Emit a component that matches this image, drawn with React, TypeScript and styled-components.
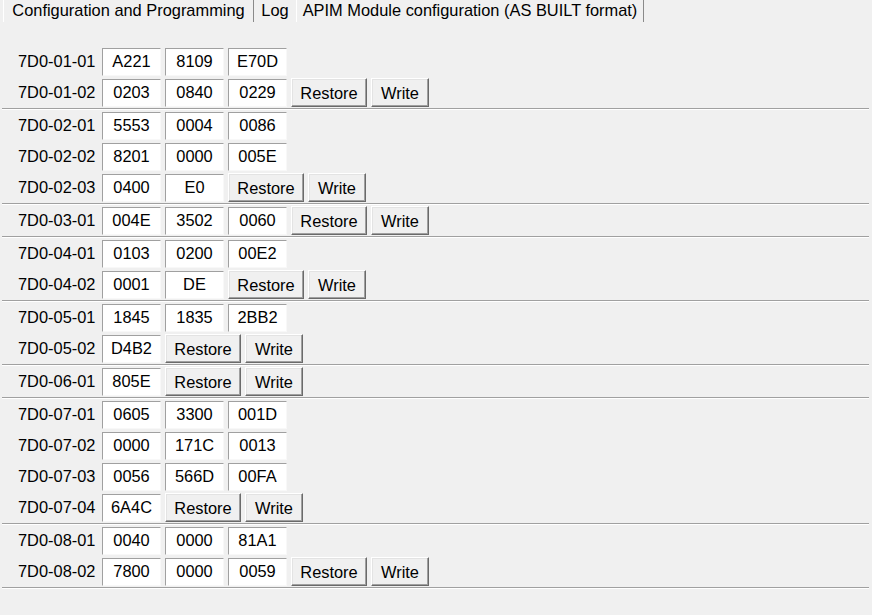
import React from "react";
import styled, { createGlobalStyle } from "styled-components";

const GlobalStyle = createGlobalStyle`
  html, body {
    margin: 0;
    padding: 0;
    background: #f0f0f0;
  }
  body {
    font-family: "Liberation Sans", Arial, sans-serif;
    font-size: 16px;
    color: #000;
  }
`;

const Window = styled.div`
  width: 872px;
  height: 615px;
  overflow: hidden;
  background: #f0f0f0;
  display: flex;
  flex-direction: column;
`;

const TabBar = styled.div`
  display: flex;
  height: 22px;
  padding-left: 3px;
`;

const Tab = styled.div<{ $w: number; $edges: boolean }>`
  box-sizing: border-box;
  width: ${(p) => p.$w}px;
  height: 22px;
  line-height: 21px;
  text-align: center;
  white-space: nowrap;
  font-size: 16.4px;
  border-left: 1px solid ${(p) => (p.$edges ? "#ffffff" : "transparent")};
  border-right: 1px solid ${(p) => (p.$edges ? "#8a8a8a" : "transparent")};
`;

const Content = styled.div`
  padding-top: 24px;
  display: flex;
  flex-direction: column;
`;

const Row = styled.div`
  height: 31px;
  display: flex;
  align-items: center;
  gap: 4px;
  padding-left: 18px;
`;

const Label = styled.div`
  width: 78px;
  margin-right: 2px;
  font-size: 16.4px;
  white-space: nowrap;
`;

const Entry = styled.div`
  box-sizing: border-box;
  width: 59px;
  height: 28px;
  background: #ffffff;
  border-top: 1px solid #a0a0a0;
  border-left: 1px solid #a0a0a0;
  border-right: 1px solid #f8f8f8;
  border-bottom: 1px solid #f8f8f8;
  display: flex;
  align-items: center;
  justify-content: center;
  font-size: 16.4px;
`;

const Button = styled.button<{ $w: number }>`
  box-sizing: border-box;
  width: ${(p) => p.$w}px;
  height: 29px;
  padding: 0;
  margin: 0;
  background: #f0f0f0;
  font-family: "Liberation Sans", Arial, sans-serif;
  font-size: 16.4px;
  color: #000;
  border: 1px solid;
  border-color: #ffffff #6a6a6a #6a6a6a #ffffff;
  box-shadow: inset -1px -1px 0 #a0a0a0, inset 1px 1px 0 #e3e3e3;
  padding-top: 2px;
`;

const Separator = styled.div`
  box-sizing: border-box;
  height: 2px;
  margin: 0 3px 0 2px;
  border-top: 1px solid #a0a0a0;
  background: #ffffff;
`;

type RowData = { id: string; values: string[]; actions?: boolean };

const groups: RowData[][] = [
  [
    { id: "7D0-01-01", values: ["A221", "8109", "E70D"] },
    { id: "7D0-01-02", values: ["0203", "0840", "0229"], actions: true },
  ],
  [
    { id: "7D0-02-01", values: ["5553", "0004", "0086"] },
    { id: "7D0-02-02", values: ["8201", "0000", "005E"] },
    { id: "7D0-02-03", values: ["0400", "E0"], actions: true },
  ],
  [{ id: "7D0-03-01", values: ["004E", "3502", "0060"], actions: true }],
  [
    { id: "7D0-04-01", values: ["0103", "0200", "00E2"] },
    { id: "7D0-04-02", values: ["0001", "DE"], actions: true },
  ],
  [
    { id: "7D0-05-01", values: ["1845", "1835", "2BB2"] },
    { id: "7D0-05-02", values: ["D4B2"], actions: true },
  ],
  [{ id: "7D0-06-01", values: ["805E"], actions: true }],
  [
    { id: "7D0-07-01", values: ["0605", "3300", "001D"] },
    { id: "7D0-07-02", values: ["0000", "171C", "0013"] },
    { id: "7D0-07-03", values: ["0056", "566D", "00FA"] },
    { id: "7D0-07-04", values: ["6A4C"], actions: true },
  ],
  [
    { id: "7D0-08-01", values: ["0040", "0000", "81A1"] },
    { id: "7D0-08-02", values: ["7800", "0000", "0059"], actions: true },
  ],
];

export default function App() {
  return (
    <Window>
      <GlobalStyle />
      <TabBar>
        <Tab $w={251} $edges>
          Configuration and Programming
        </Tab>
        <Tab $w={42} $edges={false}>
          Log
        </Tab>
        <Tab $w={348} $edges>
          APIM Module configuration (AS BUILT format)
        </Tab>
      </TabBar>
      <Content>
        {groups.map((g, gi) => (
          <React.Fragment key={gi}>
            {g.map((r) => (
              <Row key={r.id}>
                <Label>{r.id}</Label>
                {r.values.map((v, vi) => (
                  <Entry key={vi}>{v}</Entry>
                ))}
                {r.actions && (
                  <>
                    <Button $w={76}>Restore</Button>
                    <Button $w={58}>Write</Button>
                  </>
                )}
              </Row>
            ))}
            <Separator />
          </React.Fragment>
        ))}
      </Content>
    </Window>
  );
}
